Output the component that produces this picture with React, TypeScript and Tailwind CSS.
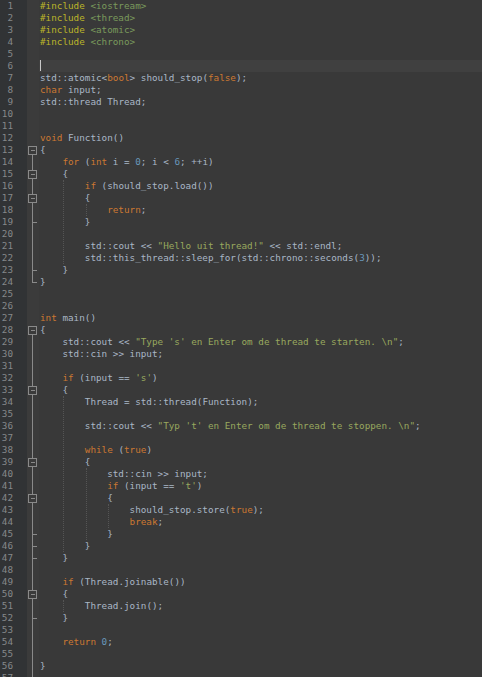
import React from "react";

const code = [
  "#include <iostream>",
  "#include <thread>",
  "#include <atomic>",
  "#include <chrono>",
  "",
  "",
  "std::atomic<bool> should_stop(false);",
  "char input;",
  "std::thread Thread;",
  "",
  "",
  "void Function()",
  "{",
  "    for (int i = 0; i < 6; ++i)",
  "    {",
  "        if (should_stop.load())",
  "        {",
  "            return;",
  "        }",
  "",
  '        std::cout << "Hello uit thread!" << std::endl;',
  "        std::this_thread::sleep_for(std::chrono::seconds(3));",
  "    }",
  "}",
  "",
  "",
  "int main()",
  "{",
  '    std::cout << "Type \'s\' en Enter om de thread te starten. \\n";',
  "    std::cin >> input;",
  "",
  "    if (input == 's')",
  "    {",
  "        Thread = std::thread(Function);",
  "",
  '        std::cout << "Typ \'t\' en Enter om de thread te stoppen. \\n";',
  "",
  "        while (true)",
  "        {",
  "            std::cin >> input;",
  "            if (input == 't')",
  "            {",
  "                should_stop.store(true);",
  "                break;",
  "            }",
  "        }",
  "    }",
  "",
  "    if (Thread.joinable())",
  "    {",
  "        Thread.join();",
  "    }",
  "",
  "    return 0;",
  "",
  "}",
  "",
];

const keywords = ["bool", "false", "true", "char", "void", "for", "int", "if", "return", "while", "break"];

// fold regions: [start, end] (1-based lines), end = null runs to the bottom
const folds: [number, number | null][] = [
  [13, 24],
  [15, 23],
  [17, 19],
  [28, null],
  [33, 47],
  [39, 46],
  [42, 45],
  [50, 52],
];

// indent guides: column, first line, last line
const guides: [number, number, number][] = [
  [4, 16, 22],
  [8, 18, 18],
  [4, 34, 46],
  [8, 40, 45],
  [12, 43, 44],
  [4, 51, 51],
];

const LH = 12;
const CW = 5.6;

function Line({ text }: { text: string }) {
  if (text.startsWith("#include")) {
    const rest = text.slice(8);
    return (
      <>
        <span className="text-[#bbb529]">#include</span>
        <span className="text-[#7a9a5c]">{rest}</span>
      </>
    );
  }
  const parts = text.split(/("[^"]*"|'[^']*'|\b[A-Za-z_]+\b|\b\d+\b)/);
  return (
    <>
      {parts.map((p, i) => {
        if (!p) return null;
        if (p.startsWith('"') || p.startsWith("'"))
          return <span key={i} className="text-[#98a85e]">{p}</span>;
        if (keywords.includes(p)) return <span key={i} className="text-[#cc7832]">{p}</span>;
        if (/^\d+$/.test(p)) return <span key={i} className="text-[#6897bb]">{p}</span>;
        return <span key={i}>{p}</span>;
      })}
    </>
  );
}

function FoldMarks() {
  const total = 57 * LH;
  return (
    <svg width="12" height={total} className="block" shapeRendering="crispEdges">
      {folds.map(([s, e], i) => {
        const top = (s - 1) * LH + 2;
        const endY = e === null ? total : (e - 1) * LH + 6.5;
        return (
          <g key={i} stroke="#8a8a8a" strokeWidth="1" fill="none">
            <line x1="5.5" y1={top + 8} x2="5.5" y2={endY} />
            {e !== null && <line x1="5.5" y1={endY} x2="10" y2={endY} />}
          </g>
        );
      })}
      {folds.map(([s], i) => {
        const top = (s - 1) * LH + 2;
        return (
          <g key={"b" + i} stroke="#8a8a8a" strokeWidth="1">
            <rect x="1.5" y={top + 0.5} width="8" height="8" fill="#3b3b3b" />
            <line x1="3.5" y1={top + 4.5} x2="7.5" y2={top + 4.5} />
          </g>
        );
      })}
    </svg>
  );
}

export default function App() {
  return (
    <div className="w-[482px] h-[677px] overflow-hidden flex bg-[#393939] font-['DejaVu_Sans_Mono',monospace] text-[9.3px] leading-[12px]">
      <div className="w-[27px] shrink-0 bg-[#313335] text-[#85888a] text-right pr-[14px] whitespace-pre">
        {code.map((_, i) => (
          <div key={i} className="h-[12px]">
            {i + 1}
          </div>
        ))}
      </div>
      <div className="w-[12px] shrink-0 bg-[#3b3b3b]">
        <FoldMarks />
      </div>
      <div className="relative flex-1 text-[#a9b7c6] whitespace-pre">
        {code.map((t, i) => (
          <div key={i} className={`h-[12px] pl-[1px] ${i === 5 ? "bg-[#404040]" : ""}`}>
            {i === 5 ? (
              <span className="inline-block w-[1px] h-[11px] bg-[#c8c8c8] align-top" />
            ) : (
              <Line text={t} />
            )}
          </div>
        ))}
        {guides.map(([col, a, b], i) => (
          <div
            key={i}
            className="absolute w-0 border-l border-dotted border-[#555555]"
            style={{ left: 1 + col * CW + 1, top: (a - 1) * LH, height: (b - a + 1) * LH }}
          />
        ))}
      </div>
    </div>
  );
}
